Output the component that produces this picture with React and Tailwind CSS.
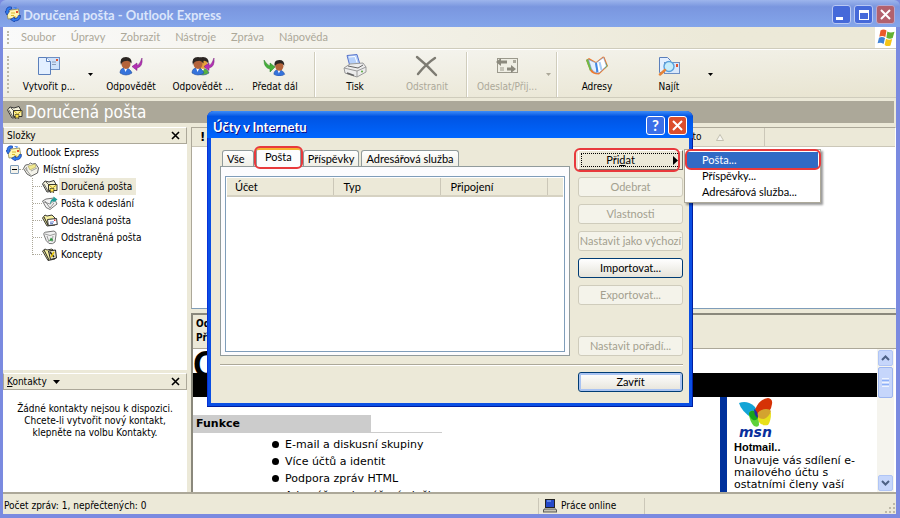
import React, { useState } from 'react';

const MENU = ['Soubor', 'Úpravy', 'Zobrazit', 'Nástroje', 'Zpráva', 'Nápověda'];

const FlagIcon = () => (
  <svg width="20" height="18" viewBox="0 0 20 18">
    <path d="M4.500 1.500q3-2 6 0l-1.200 6.500q-3-2-6-.3z" fill="#ea5a2a" />
    <path d="M11.300 2.500q3 1.600 7.200.3l-1.800 6.200q-3 1.500-6.300-.2z" fill="#63b132" />
    <path d="M3 8.700q3-1.700 6 .2l-1.400 6q-3-2-6-.6z" fill="#3f83d8" />
    <path d="M10 9.800q3 1.600 6.200.2l-1.700 6.500q-3 1.400-5.900-.6z" fill="#f5c518" />
  </svg>
);

const ExpressIcon = () => (
  <svg width="16" height="16" viewBox="0 0 16 16" className="shrink-0">
    <path d="M1.500 4.500l12-1.500 1.500 8.500L3 13z" fill="#fff6b0" stroke="#8f8850" strokeWidth=".8" />
    <path d="M6 9.500h3M6 7h4M8 11h3" stroke="#d8b92c" />
    <rect x="11" y="5" width="2" height="2" fill="#e0522c" />
    <path d="M6.500 1Q1 0 1 5.500H0L2 9l2.500-3.500h-1Q3.500 3 6.500 3z" fill="#2f7cf0" stroke="#0c2f96" strokeWidth=".6" />
    <path d="M15.500 9.500q0 5.500-6 5.500v1L5.500 13.500 9.500 11v1.800q3.500 0 3.800-3.300z" fill="#2f7cf0" stroke="#0c2f96" strokeWidth=".6" />
    <path d="M8 1l4 .5L11 3z" fill="#2f7cf0" />
  </svg>
);

const NewMailIcon = () => (
  <svg width="24" height="20" viewBox="0 0 24 20">
    <rect x="7.500" y="1.500" width="15" height="12" fill="#cfe2fb" stroke="#6d8fc4" />
    <path d="M15 6h4M15 8.500h4" stroke="#8c9cb8" />
    <rect x="19" y="3" width="2" height="2" fill="#e0522c" />
    <path d="M1.500 1.500h8l4 4v13h-12z" fill="#e3efff" stroke="#5b7fbb" />
    <path d="M9.500 1.500v4h4" fill="#fff" stroke="#5b7fbb" />
  </svg>
);

const Person = ({ x = 0, head = '#b4633a', body = '#3573dc' }) => (
  <g transform={`translate(${x} 0)`}>
    <path d="M1 17q0-5 5-5t7 5q-6 4-12 0z" fill={body} stroke="#234f9e" strokeWidth=".6" />
    <path d="M5 12l1.500 4 2-4z" fill="#fff" />
    <ellipse cx="7" cy="8" rx="4.500" ry="5" fill={head} />
    <path d="M2 9Q0 1 7 1q6 0 5.500 6.500Q10 4 7 5 3 5 2 9z" fill="#2b2522" />
  </g>
);

const ReplyIcon = () => (
  <svg width="24" height="20" viewBox="0 0 24 20">
    <Person />
    <path d="M23 2q1 9-5 10v2.500L13 10.500 18 7v2.500q3-1 5-7.500z" fill="#b42fb4" stroke="#74197b" strokeWidth=".5" />
  </svg>
);

const ReplyAllIcon = () => (
  <svg width="24" height="20" viewBox="0 0 24 20">
    <Person x={5} head="#e8a23c" body="#58b13f" />
    <Person />
    <path d="M23 2q1 9-5 10v2.500L13 10.500 18 7v2.500q3-1 5-7.500z" fill="#b42fb4" stroke="#74197b" strokeWidth=".5" />
  </svg>
);

const ForwardIcon = () => (
  <svg width="24" height="20" viewBox="0 0 24 20">
    <g transform="translate(10 3) scale(.9)">
      <Person />
    </g>
    <path d="M1 4q0 8 6 9v3l5-5-5-4v3q-3-1-6-6z" fill="#45b03a" stroke="#237a20" strokeWidth=".5" />
  </svg>
);

const PrinterIcon = () => (
  <svg width="24" height="24" viewBox="0 0 24 24">
    <path d="M4 1.500l10-1 3 10-10 2z" fill="#b5d0fb" stroke="#5a74c9" />
    <path d="M6 3l6-.5 2 6" fill="none" stroke="#fff" />
    <path d="M1 14l6-4 13-1 3 4v5l-9 5-12-4z" fill="#ececec" stroke="#9a9a9a" />
    <path d="M1 14l13 3 9-4M14 17v6" fill="none" stroke="#9a9a9a" />
    <path d="M5 12l10 2 5-3" fill="none" stroke="#666" />
    <path d="M4 19l7 2.500" stroke="#666" strokeWidth="1.500" />
    <circle cx="19" cy="17.500" r="1" fill="#5aa83a" />
  </svg>
);

const DeleteIcon = () => (
  <svg width="24" height="22" viewBox="0 0 24 22">
    <path d="M2 2q10 8 19 18M20 3Q11 9 3 19" fill="none" stroke="#7d7b72" strokeWidth="2.400" strokeLinecap="round" />
  </svg>
);

const SendReceiveIcon = () => (
  <svg width="24" height="20" viewBox="0 0 24 20">
    <rect x="2.500" y="2.500" width="20" height="14" fill="#efeee4" stroke="#9b998c" />
    <path d="M1 6l5-4v2.500h6v3H6V10zM21 13l-5-4v2.500h-4v3h4V17z" fill="#8b897d" />
    <rect x="18" y="4" width="3" height="3" fill="#aaa89c" />
    <path d="M5 12h4M5 14h4" stroke="#9b998c" />
  </svg>
);

const BookIcon = () => (
  <svg width="24" height="20" viewBox="0 0 24 20">
    <path d="M1 4l3-2 7 4 7-5.500 1.500.5 3.500 9-9 8.500q-7 0-9-4z" fill="#f07a2c" />
    <path d="M20.500 6l2 4-3 3z" fill="#55b148" />
    <path d="M1 4l2-1 4 9-2 3z" fill="#6fbb45" />
    <path d="M3.500 3.500L11 7l1 10q-4-1-5.500-4z" fill="#e4f0ff" stroke="#6f98d4" strokeWidth=".6" />
    <path d="M11 7l7.500-5.500 3 8.500-7 6.500-2.500.5z" fill="#fff" stroke="#6f98d4" strokeWidth=".6" />
    <path d="M11 7l1.500 9" stroke="#3f86e4" strokeWidth="2" />
    <path d="M14.500 6l2 8" stroke="#a8cdf8" strokeWidth="2" />
  </svg>
);

const FindIcon = () => (
  <svg width="24" height="20" viewBox="0 0 24 20">
    <path d="M2.500 1.500h8l3 3v12h-11z" fill="#e3efff" stroke="#5b7fbb" />
    <rect x="7.500" y="6.500" width="15" height="11" fill="#d9e8fb" stroke="#6d8fc4" />
    <rect x="19" y="8" width="2" height="3" fill="#e0522c" />
    <circle cx="12" cy="10.500" r="5" fill="#c5ecfb" stroke="#5aa0dc" strokeWidth="1.400" />
    <path d="M8 14l-5 4.500" stroke="#e5843a" strokeWidth="2.500" strokeLinecap="round" />
  </svg>
);

const FolderIcon = ({ kind }) => (
  <svg width="16" height="15" viewBox="0 0 16 15" className="shrink-0">
    {kind === 'root' && (
      <>
        <path d="M.5 6.500L2.500 3l3-.5 2-1.500 2 1 3-.5L15.500 6l-1 5L8 14.300 4 12z" fill="#f4f3ea" stroke="#555" strokeWidth=".9" />
        <path d="M2 6l5.500 7M4 9l-.5-4M8 9l6-3" fill="none" stroke="#888" strokeWidth=".8" />
        <path d="M5 4l2 4 6-3-1-3-3 1z" fill="#f2ea8e" stroke="#a8a060" strokeWidth=".6" />
      </>
    )}
    {kind === 'inbox' && (
      <>
        <path d="M.5 5L3 2l4 1 5-1.500 2 4L12 12l-7 1z" fill="#f4f2dc" stroke="#222" strokeWidth=".9" />
        <path d="M2 5l4 7M4 3l3 3" fill="none" stroke="#444" strokeWidth=".8" />
        <path d="M6.500 5.500h8.500v6H6.500z" fill="#fff3a0" stroke="#222" strokeWidth=".9" />
        <path d="M7 6l3.500 3L14.500 6" fill="none" stroke="#b89e10" />
        <path d="M8 9.500h4L11.500 14 10 12.500 8.500 14z" fill="#ffe34a" stroke="#222" strokeWidth=".6" />
      </>
    )}
    {kind === 'out' && (
      <>
        <path d="M.5 5L4 3l8-1 3 6-7 5.500-4-2z" fill="#f2f2f2" stroke="#555" strokeWidth=".8" />
        <path d="M2 6l6 2 5-4M3 5l5 7 4-5" fill="none" stroke="#777" strokeWidth=".8" />
        <path d="M8 9q0-6 3.500-6.500V.5l4 3-4 3V5Q9 5 8 9z" fill="#1f9d98" />
      </>
    )}
    {kind === 'sent' && (
      <>
        <path d="M.5 5L3 2l2 1 5-1 3 3v7l-8 1z" fill="#f6f0a4" stroke="#222" strokeWidth=".9" />
        <path d="M2 4l4 8" stroke="#222" />
        <path d="M5.500 6.500l9-1 .8 6-9 1z" fill="#fff" stroke="#222" strokeWidth=".9" />
        <path d="M8 9.200l4-.4M8 10.800l3-.3" stroke="#3558b8" strokeWidth=".8" />
        <rect x="12" y="6.500" width="1.500" height="1.500" fill="#d33" />
      </>
    )}
    {kind === 'trash' && (
      <>
        <path d="M2 5Q1 2 5 2l7-1q3 1 2 4l-1 7q-2 2.500-6 1.500Q4 12 2 5z" fill="#f0f0f0" stroke="#555" strokeWidth=".8" />
        <path d="M3 4q5 3 10 0M5 6l2 6M11 6l-1 6" fill="none" stroke="#888" strokeWidth=".8" />
        <path d="M7 11l2-3.500 2.500 3z" fill="#2f9440" />
      </>
    )}
    {kind === 'draft' && (
      <>
        <path d="M.5 4L3 2l2 1 5-1 3 3v7l-7 1.500z" fill="#f6f0a4" stroke="#222" strokeWidth=".9" />
        <path d="M2 3l5 10" stroke="#222" />
        <path d="M6.500 4l7-1 1 8-6 1.500z" fill="#e6e2c4" stroke="#222" />
        <path d="M8 5l4 5" stroke="#222" strokeWidth="1.500" />
        <path d="M12 5l-3 5" stroke="#e6c200" strokeWidth="1.500" />
      </>
    )}
  </svg>
);

const ButterflyIcon = () => (
  <svg width="36" height="31" viewBox="0 0 36 31">
    <path d="M0 6q8-3 15 3 4 4 5 10l-6 3Q2 14 0 6z" fill="#12a4d6" />
    <path d="M16 13q4-11 13-12 5 1 4 6-1 8-8 12l-7 1z" fill="#d63206" />
    <path d="M10 18q0-5 5-4 5 2 5 14-1 3-5 1-4-4-5-11z" fill="#5fd23a" />
    <path d="M18 19q1-5 8-6 5 0 6 3 0 8-3 12-7 1-9-3z" fill="#e8e01a" />
    <path d="M18 18q2-6 9-6 4 0 5 2-2 6-7 8-6 0-7-4z" fill="#d3a32f" />
    <path d="M10 16q2-3 5-2l4 7q-2 3-5 2-4-3-4-7z" fill="#16a31c" />
    <path d="M15 12q4 2 4 9-4-2-4-9z" fill="#262c9e" />
  </svg>
);

const FOLDERS = [
  { label: 'Doručená pošta', kind: 'inbox' },
  { label: 'Pošta k odeslání', kind: 'out' },
  { label: 'Odeslaná pošta', kind: 'sent' },
  { label: 'Odstraněná pošta', kind: 'trash' },
  { label: 'Koncepty', kind: 'draft' },
];

const Caret = ({ disabled }) => (
  <svg width="5" height="3" viewBox="0 0 5 3" className={disabled ? 'text-[#aca899]' : 'text-black'}>
    <path d="M0 0h5L2.500 3z" fill="currentColor" />
  </svg>
);

const ToolButton = ({ icon, label, disabled }) => (
  <button
    disabled={disabled}
    className={`w-[72px] shrink-0 flex flex-col items-center ${disabled ? 'text-[#aca899]' : 'text-black'}`}
  >
    <span className="h-7 flex items-center justify-center">{icon}</span>
    <span className="leading-[14px] whitespace-nowrap">{label}</span>
  </button>
);

const ToolCaret = ({ label, disabled }) => (
  <button aria-label={label} disabled={disabled} className="w-[10px] shrink-0 flex items-center justify-center">
    <Caret disabled={disabled} />
  </button>
);

const Divider = () => <div className="w-[2px] mx-[3px] shrink-0 bg-[#d0cdbc] border-r border-white" />;

const Grip = () => <div className="w-0 my-1 ml-1 border-l-2 border-dotted border-[#bdb9a8]" />;

const CloseX = () => (
  <svg width="9" height="9" viewBox="0 0 9 9">
    <path d="M1 1l7 7M8 1L1 8" stroke="currentColor" strokeWidth="1.600" />
  </svg>
);

const PaneHeader = ({ children, label }) => (
  <div className="h-[17px] shrink-0 flex items-center justify-between pl-[3px] pr-[6px] bg-[#ece9d8] border border-[#aca899] border-t-white">
    {children}
    <button aria-label={label}>
      <CloseX />
    </button>
  </div>
);

const Sidebar = () => {
  const [selected, setSelected] = useState('Doručená pošta');

  return (
    <aside className="w-[184px] shrink-0 flex flex-col gap-[3px]">
      <section className="flex-1 min-h-0 flex flex-col bg-white">
        <PaneHeader label="Zavřít složky">
          <h2>Složky</h2>
        </PaneHeader>
        <div className="pl-[3px]">
          <button className="h-[17px] flex items-center gap-1">
            <ExpressIcon />
            Outlook Express
          </button>
          <div className="h-[17px] flex items-center pl-1">
            <button aria-label="Sbalit" className="w-[9px] h-[9px] flex items-center justify-center border border-[#7f9db9] rounded-[1px] bg-[#f4f2ea]">
              <span className="w-[5px] h-px bg-black" />
            </button>
            <span className="w-1 border-t border-dotted border-[#aca899]" />
            <button className="flex items-center gap-1">
              <FolderIcon kind="root" />
              Místní složky
            </button>
          </div>
          <ul className="ml-[26px] h-[77px] border-l border-dotted border-[#aca899]">
            {FOLDERS.map((folder) => (
              <li key={folder.label} className="h-[17px] flex items-center">
                <span className="w-[9px] border-t border-dotted border-[#aca899]" />
                <button onClick={() => setSelected(folder.label)} className="flex items-center gap-px">
                  <FolderIcon kind={folder.kind} />
                  <span className={`h-[17px] leading-[17px] px-[2px] ${selected === folder.label ? 'bg-[#ece9d8] pr-1' : ''}`}>
                    {folder.label}
                  </span>
                </button>
              </li>
            ))}
          </ul>
        </div>
      </section>

      <section className="h-[119px] shrink-0 flex flex-col bg-white">
        <PaneHeader label="Zavřít kontakty">
          <button className="flex items-center gap-[6px]">
            <span><u>K</u>ontakty</span>
            <svg width="7" height="4" viewBox="0 0 7 4">
              <path d="M0 0h7L3.500 4z" />
            </svg>
          </button>
        </PaneHeader>
        <p className="px-[10px] pt-[13px] text-center leading-3">
          Žádné kontakty nejsou k dispozici. Chcete-li vytvořit nový kontakt, klepněte na volbu Kontakty.
        </p>
      </section>
    </aside>
  );
};

const MessageList = () => (
  <section className="flex-1 min-h-0 bg-white border border-[#aca899] border-b-[#7f9db9] border-r-white">
    <table className="w-full table-fixed text-left bg-[#ece9d8] shadow-[0_1px_0_#cbc7b8]">
      <thead>
        <tr className="h-[18px]">
          <th className="w-[220px] pl-2 font-bold text-[13px] leading-4">!</th>
          <th className="w-[245px] pl-2 font-normal">Předmět</th>
          <th className="w-[107px] pl-4 font-normal border-r border-[#cbc7b8]">
            <span className="flex items-center gap-[14px]">
              Přijato
              <svg width="8" height="7" viewBox="0 0 8 7">
                <path d="M.5 6.500h7L4 .5z" fill="#f7f6f0" stroke="#b8b5a6" strokeWidth=".8" />
              </svg>
            </span>
          </th>
          <th />
        </tr>
      </thead>
    </table>
  </section>
);

const ScrollButton = ({ label, d }) => (
  <button aria-label={label} className="h-[16px] shrink-0 flex items-center justify-center rounded-[2px] border border-[#b0c5f5] bg-[#c6d6fb]">
    <svg width="9" height="6" viewBox="0 0 9 6">
      <path d={d} fill="none" stroke="#4d6185" strokeWidth="2" />
    </svg>
  </button>
);

const Preview = () => (
  <section className="h-[179px] shrink-0 flex flex-col bg-white border-l-2 border-t-2 border-[#8a887c]">
    <div className="h-[34px] shrink-0 px-[3px] pt-[2px] bg-[#ece9d8] border-b border-[#aca899] font-bold leading-[14px]">
      <div>Od:</div>
      <div>Předmět:</div>
    </div>
    <div className="flex-1 min-h-0 flex">
      <div className="flex-1 min-w-0 flex flex-col text-[11px] font-['DejaVu_Sans',sans-serif]">
        <h2 className="h-[24px] shrink-0 overflow-hidden font-['Liberation_Sans',sans-serif] font-bold text-[36px] leading-[32px]">
          Outlook Express
        </h2>
        <div className="h-6 shrink-0 bg-black" />
        <div className="flex-1 min-h-0 flex">
          <div className="flex-1 min-w-0 overflow-hidden pt-[18px]">
            <div className="w-[249px] border-b border-[#cccccc]">
              <h3 className="w-[178px] h-[17px] pl-[3px] bg-[#cccccc] font-bold leading-[18px]">Funkce</h3>
            </div>
            <ul className="pl-[79px] pt-[3px] leading-[17px]">
              {['E-mail a diskusní skupiny', 'Více účtů a identit', 'Podpora zpráv HTML', 'Adresář a adresářové služby'].map((item) => (
                <li key={item} className="flex items-center gap-[6px]">
                  <span className="w-[7px] h-[7px] rounded-full bg-black" />
                  {item}
                </li>
              ))}
            </ul>
          </div>
          <div className="w-[157px] shrink-0 overflow-hidden border-l-[7px] border-[#00319c] pl-[7px]">
            <div className="w-9 pl-[5px] flex flex-col">
              <ButterflyIcon />
              <span className="h-[11px] font-['DejaVu_Sans',sans-serif] font-bold italic text-[14px] leading-[9px] text-[#0a2f9c]">msn</span>
            </div>
            <div className="font-['Liberation_Sans',sans-serif] font-bold leading-4">Hotmail..</div>
            <p className="leading-3">Unavuje vás sdílení e-mailového účtu s ostatními členy vaší</p>
          </div>
        </div>
      </div>
      <div className="w-[17px] mr-[2px] shrink-0 flex flex-col gap-px p-px bg-[#f5f4ee]">
        <ScrollButton label="Posunout nahoru" d="M1 5l3.500-3.500L8 5" />
        <div className="h-[31px] flex flex-col items-center justify-center gap-px rounded-[2px] border border-[#9db6f0] bg-[#c6d6fb]">
          <span className="w-[7px] h-px bg-[#eef4fe]" />
          <span className="w-[7px] h-px bg-[#8cb0f8]" />
          <span className="w-[7px] h-px bg-[#eef4fe]" />
          <span className="w-[7px] h-px bg-[#8cb0f8]" />
          <span className="w-[7px] h-px bg-[#eef4fe]" />
        </div>
        <div className="flex-1" />
        <ScrollButton label="Posunout dolů" d="M1 1l3.500 3.500L8 1" />
      </div>
    </div>
  </section>
);

const DialogButton = ({ children, disabled, primary }) => (
  <button
    disabled={disabled}
    className={`h-5 w-full shrink-0 flex items-center justify-center rounded-[3px] border whitespace-nowrap ${
      disabled
        ? 'border-[#cfccbc] bg-[#f4f3ea] text-[#a3a08f]'
        : 'border-[#003c74] bg-linear-to-b from-white to-[#e6e4da] text-black'
    } ${primary ? 'shadow-[inset_0_0_0_2px_#a9c3f2]' : ''}`}
  >
    {children}
  </button>
);

const AddMenu = () => (
  <ul className="absolute left-[106px] -top-px w-[137px] p-[2px] bg-white border border-[#aca899] shadow-[2px_2px_2px_rgba(0,0,0,0.4)]">
    <li className="relative">
      <button className="w-full h-4 pl-[15px] text-left leading-4 bg-[#316ac5] text-white">Pošta...</button>
      <span className="absolute -left-[2px] -right-[3px] -top-[3px] -bottom-[2px] border-2 border-[#e8393c] rounded-md pointer-events-none" />
    </li>
    <li><button className="w-full h-4 pl-[15px] text-left leading-4">Příspěvky...</button></li>
    <li><button className="w-full h-4 pl-[15px] text-left leading-4">Adresářová služba...</button></li>
  </ul>
);

const Tab = ({ label, active, onClick }) => (
  <button
    onClick={onClick}
    className={`relative whitespace-nowrap rounded-t-[3px] border border-b-0 border-[#919b9c] ${
      active
        ? 'h-[19px] px-2 pb-1 -mb-px bg-[#fcfcfe] border-t-2 border-t-[#f5b22c]'
        : 'h-4 min-w-8 px-1 text-left leading-4 bg-linear-to-b from-white to-[#f0efe6]'
    }`}
  >
    {label}
    {active && <span className="absolute -inset-x-[3px] -top-1 -bottom-[2px] border-2 border-[#e8393c] rounded-md" />}
  </button>
);

const AccountsDialog = () => {
  const [tab, setTab] = useState('Pošta');

  return (
    <div className="absolute inset-0 flex items-center justify-center pointer-events-none">
      <div
        role="dialog"
        aria-label="Účty v Internetu"
        className="w-[486px] pointer-events-auto rounded-t-[7px] bg-[#0a4fe4] px-1 pb-1 shadow-[inset_-1px_-1px_0_#001ea0,inset_1px_0_0_#0831d9] text-[11px] font-['Lato',sans-serif]"
      >
        <header className="-mx-1 h-[27px] px-[6px] flex items-center gap-[3px] rounded-t-[7px] text-white bg-linear-to-b from-[#3c8cf8] via-[#0054e3] via-20% to-[#0066ff]">
          <h2 className="flex-1 pt-1 font-bold text-[13px] [text-shadow:1px_1px_0_#0f1089]">Účty v Internetu</h2>
          <button aria-label="Nápověda" className="w-[19px] h-[19px] mt-px rounded-[3px] border border-white bg-[#3b6fe8] font-bold text-[15px] leading-[17px]">
            ?
          </button>
          <button aria-label="Zavřít" className="w-[19px] h-[19px] mt-px rounded-[3px] border border-white bg-[#dc4e2c] flex items-center justify-center">
            <svg width="11" height="11" viewBox="0 0 11 11">
              <path d="M1 1l9 9M10 1l-9 9" stroke="#fff" strokeWidth="2" />
            </svg>
          </button>
        </header>

        <div className="bg-[#ece9d8] pt-2 pb-[11px] pl-[9px] pr-[6px]">
          <div className="flex gap-2">
            <div className="flex-1 min-w-0 flex flex-col">
              <div className="h-5 pl-[2px] flex items-end gap-[2px]" role="tablist">
                {['Vše', 'Pošta', 'Příspěvky', 'Adresářová služba'].map((t) => (
                  <Tab key={t} label={t} active={tab === t} onClick={() => setTab(t)} />
                ))}
              </div>
              <div className="h-[190px] pt-[9px] px-1 pb-[3px] bg-[#fcfcfe] border border-[#919b9c]">
                <div className="h-full border border-[#7f9db9] bg-white p-px">
                  <table className="w-full table-fixed text-left bg-[#ece9d8] border-b-2 border-[#d6d2c2]">
                    <thead>
                      <tr className="h-[18px]">
                        <th className="w-[106px] pl-2 font-normal border-r border-[#cbc7b8]">Účet</th>
                        <th className="w-[107px] pl-[10px] font-normal border-r border-[#cbc7b8]">Typ</th>
                        <th className="w-[107px] pl-[10px] font-normal border-r border-[#cbc7b8]">Připojení</th>
                        <th />
                      </tr>
                    </thead>
                  </table>
                </div>
              </div>
            </div>

            <div className="w-[105px] shrink-0 flex flex-col gap-[7px] pt-1">
              <div className="relative">
                <button className="relative w-full h-5 flex items-center justify-center border border-white border-r-[#716f64] border-b-[#716f64] bg-[#ece9d8]">
                  <span className="absolute inset-[2px] border border-dotted border-black" />
                  <span className="pr-5">Při<u>d</u>at</span>
                  <svg width="5" height="9" viewBox="0 0 5 9" className="absolute right-1">
                    <path d="M0 0l5 4.500L0 9z" />
                  </svg>
                </button>
                <span className="absolute -left-1 right-[3px] -top-[2px] -bottom-[2px] border-2 border-[#e8393c] rounded-md pointer-events-none" />
                <AddMenu />
              </div>
              <DialogButton disabled>Odebrat</DialogButton>
              <DialogButton disabled>Vlastnosti</DialogButton>
              <DialogButton disabled>Nastavit jako výchozí</DialogButton>
              <DialogButton>Importovat...</DialogButton>
              <DialogButton disabled>Exportovat...</DialogButton>
              <div className="h-[17px]" />
              <DialogButton disabled>Nastavit pořadí...</DialogButton>
            </div>
          </div>
          <hr className="mt-2 mb-[7px] border-0 border-t border-[#aca899] shadow-[0_1px_0_white]" />
          <div className="w-[105px] ml-auto">
            <DialogButton primary>Zavřít</DialogButton>
          </div>
        </div>
      </div>
    </div>
  );
};

export default function App() {
  return (
    <div className="relative h-screen min-h-[500px] overflow-hidden flex flex-col bg-[#7a8ae0] text-[10px] leading-[14px] text-black font-['DejaVu_Sans_Condensed','DejaVu_Sans',sans-serif]">
      <header className="h-[27px] shrink-0 px-[5px] flex items-center gap-[2px] rounded-t-[6px] bg-linear-to-b from-[#9db5ec] via-[#7a96df] via-25% to-[#84a5ea]">
        <ExpressIcon />
        <h1 className="flex-1 pt-[2px] font-['Lato',sans-serif] font-bold text-[13px] text-[#dbe5fb]">
          Doručená pošta - Outlook Express
        </h1>
        <button aria-label="Minimalizovat" className="w-[19px] h-[19px] mt-[2px] pl-[3px] pb-[3px] flex items-end rounded-[3px] border border-[#b9c8f3] bg-[#4569d9]">
          <span className="w-[7px] h-[3px] bg-white" />
        </button>
        <button aria-label="Maximalizovat" className="w-[19px] h-[19px] mt-[2px] ml-px flex items-center justify-center rounded-[3px] border border-[#b9c8f3] bg-[#4569d9]">
          <span className="w-[10px] h-[10px] border border-t-[3px] border-white" />
        </button>
        <button aria-label="Zavřít okno" className="w-[19px] h-[19px] mt-[2px] ml-px flex items-center justify-center rounded-[3px] border border-[#b9a8cc] bg-[#b2616d]">
          <svg width="11" height="11" viewBox="0 0 11 11">
            <path d="M1 1l9 9M10 1l-9 9" stroke="#fff" strokeWidth="2" />
          </svg>
        </button>
      </header>

      <div className="flex-1 min-h-0 mx-1 mb-1 -ml-px pl-1 flex flex-col">
        <div className="flex-1 min-h-0 flex flex-col bg-[#ece9d8]">
          <nav className="h-[22px] shrink-0 flex border-b border-[#cfccbc] bg-linear-to-r from-[#fafafa] to-[#ece9d8] to-80% text-[#aca899]">
            <Grip />
            <div className="flex-1 flex items-center gap-[15px] pl-3 pb-[2px] text-[11px] font-['Lato',sans-serif]">
              {MENU.map((item) => (
                <button key={item}>{item}</button>
              ))}
            </div>
            <div className="w-[21px] bg-white flex items-center justify-center">
              <FlagIcon />
            </div>
          </nav>

          <div className="h-[49px] shrink-0 flex items-stretch pt-[2px] border-t border-white border-b border-b-[#cfccbc] bg-linear-to-br from-[#f8f8f6] to-[#e8e4d0]">
            <Grip />
            <div className="w-1" />
            <ToolButton icon={<NewMailIcon />} label="Vytvořit p..." />
            <ToolCaret label="Možnosti nové zprávy" />
            <ToolButton icon={<ReplyIcon />} label="Odpovědět" />
            <ToolButton icon={<ReplyAllIcon />} label="Odpovědět ..." />
            <ToolButton icon={<ForwardIcon />} label="Předat dál" />
            <Divider />
            <ToolButton icon={<PrinterIcon />} label="Tisk" />
            <ToolButton icon={<DeleteIcon />} label="Odstranit" disabled />
            <Divider />
            <ToolButton icon={<SendReceiveIcon />} label="Odeslat/Přij..." disabled />
            <ToolCaret label="Možnosti odesílání" disabled />
            <Divider />
            <ToolButton icon={<BookIcon />} label="Adresy" />
            <ToolButton icon={<FindIcon />} label="Najít" />
            <ToolCaret label="Možnosti hledání" />
          </div>

          <div className="h-[22px] shrink-0 mt-[3px] mr-[2px] pl-1 flex items-center gap-[2px] bg-[#aca899] text-white">
            <FolderIcon kind="inbox" />
            <h2 className="text-[17px] leading-5">Doručená pošta</h2>
          </div>

          <div className="flex-1 min-h-0 flex gap-1 pt-1">
            <Sidebar />
            <main className="flex-1 min-w-0 flex flex-col gap-1">
              <MessageList />
              <Preview />
            </main>
          </div>

          <footer className="h-[22px] shrink-0 flex items-center pt-1 border-t-2 border-[#aca899]">
            <span className="flex-1 pl-px">Počet zpráv: 1, nepřečtených: 0</span>
            <span className="w-[346px] h-4 flex items-center gap-1 pl-1 border-l border-[#cbc7b8]">
              <svg width="14" height="14" viewBox="0 0 14 14">
                <rect x="2.500" y=".5" width="9" height="8" fill="#2448c8" stroke="#222" />
                <path d="M4 2h4" stroke="#9cc0ff" />
                <path d="M1 10h12l1 3H0z" fill="#c9c6b8" stroke="#222" strokeWidth=".7" />
              </svg>
              <span className="w-[79px]">Práce online</span>
              <span className="h-full border-l border-[#cbc7b8]" />
            </span>
            <svg width="12" height="12" viewBox="0 0 12 12" className="self-end">
              <path d="M9 1h2v2H9zM5 5h2v2H5zM9 5h2v2H9zM1 9h2v2H1zM5 9h2v2H5zM9 9h2v2H9z" fill="#bdb9a8" />
            </svg>
          </footer>
        </div>
      </div>

      <AccountsDialog />
    </div>
  );
}
